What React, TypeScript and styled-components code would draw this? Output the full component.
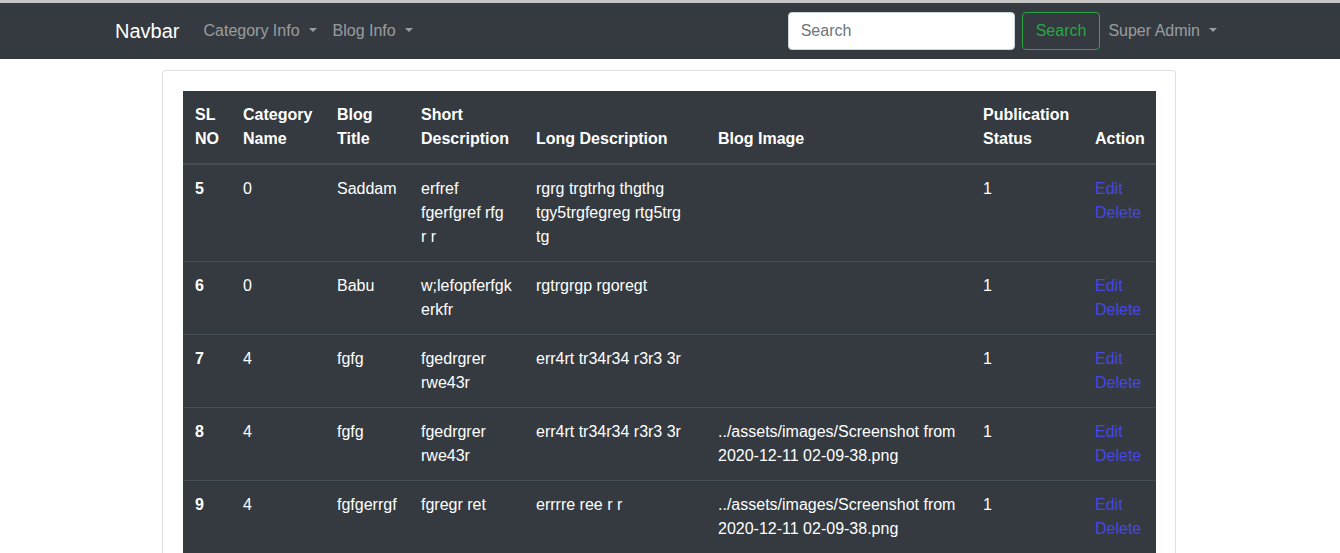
import React from "react";
import styled, { createGlobalStyle } from "styled-components";

const GlobalStyle = createGlobalStyle`
  html, body {
    margin: 0;
    padding: 0;
    background: #fff;
  }
  body {
    font-family: "Liberation Sans", Arial, sans-serif;
    font-size: 16px;
    line-height: 1.5;
    color: #212529;
    border-top: 3px solid #c6c6c6;
  }
  * {
    box-sizing: border-box;
  }
`;

type Blog = {
  id: number;
  category: string;
  title: string;
  short: string;
  long: string;
  image: string;
  status: number;
};

const blogs: Blog[] = [
  {
    id: 5,
    category: "0",
    title: "Saddam",
    short: "erfref fgerfgref rfg r r",
    long: "rgrg trgtrhg thgthg tgy5trgfegreg rtg5trg tg",
    image: "",
    status: 1,
  },
  {
    id: 6,
    category: "0",
    title: "Babu",
    short: "w;lefopferfgk erkfr",
    long: "rgtrgrgp rgoregt",
    image: "",
    status: 1,
  },
  {
    id: 7,
    category: "4",
    title: "fgfg",
    short: "fgedrgrer rwe43r",
    long: "err4rt tr34r34 r3r3 3r",
    image: "",
    status: 1,
  },
  {
    id: 8,
    category: "4",
    title: "fgfg",
    short: "fgedrgrer rwe43r",
    long: "err4rt tr34r34 r3r3 3r",
    image: "../assets/images/Screenshot from 2020-12-11 02-09-38.png",
    status: 1,
  },
  {
    id: 9,
    category: "4",
    title: "fgfgerrgf",
    short: "fgregr ret",
    long: "errrre ree r r",
    image: "../assets/images/Screenshot from 2020-12-11 02-09-38.png",
    status: 1,
  },
];

const columns = [48, 94, 84, 115, 182, 265, 112, 73];

const App: React.FC = () => {
  return (
    <>
      <GlobalStyle />
      <Navbar>
        <NavContainer>
          <Brand href="#">Navbar</Brand>
          <NavList>
            <NavItem>
              <NavLink href="#">
                Category Info
                <Caret />
              </NavLink>
            </NavItem>
            <NavItem>
              <NavLink href="#">
                Blog Info
                <Caret />
              </NavLink>
            </NavItem>
          </NavList>
          <SearchForm onSubmit={(e) => e.preventDefault()}>
            <SearchInput type="search" placeholder="Search" />
            <SearchButton type="submit">Search</SearchButton>
          </SearchForm>
          <NavList>
            <NavItem>
              <NavLink href="#">
                Super Admin
                <Caret />
              </NavLink>
            </NavItem>
          </NavList>
        </NavContainer>
      </Navbar>

      <Page>
        <Card>
          <CardBody>
            <Table>
              <colgroup>
                {columns.map((w, i) => (
                  <col key={i} style={{ width: w }} />
                ))}
              </colgroup>
              <thead>
                <tr>
                  <Th>SL NO</Th>
                  <Th>Category Name</Th>
                  <Th>Blog Title</Th>
                  <Th>Short Description</Th>
                  <Th>Long Description</Th>
                  <Th>Blog Image</Th>
                  <Th>Publication Status</Th>
                  <Th>Action</Th>
                </tr>
              </thead>
              <tbody>
                {blogs.map((b) => (
                  <tr key={b.id}>
                    <Td $bold>{b.id}</Td>
                    <Td>{b.category}</Td>
                    <Td>{b.title}</Td>
                    <Td>{b.short}</Td>
                    <Td>{b.long}</Td>
                    <Td>{b.image}</Td>
                    <Td>{b.status}</Td>
                    <Td>
                      <ActionLink href="#">Edit</ActionLink>
                      <ActionLink href="#">Delete</ActionLink>
                    </Td>
                  </tr>
                ))}
              </tbody>
            </Table>
          </CardBody>
        </Card>
      </Page>
    </>
  );
};
export default App;

const Navbar = styled.nav`
  background: #343a40;
  padding: 8px 0;
`;

const NavContainer = styled.div`
  width: 1140px;
  margin: 0 auto;
  padding: 0 15px;
  display: flex;
  align-items: center;
  height: 40px;
`;

const Brand = styled.a`
  font-size: 20px;
  line-height: 30px;
  color: #fff;
  text-decoration: none;
  margin-right: 16px;
  padding: 5px 0;
`;

const NavList = styled.ul`
  display: flex;
  list-style: none;
  margin: 0;
  padding: 0;
`;

const NavItem = styled.li`
  display: block;
`;

const NavLink = styled.a`
  display: block;
  padding: 8px;
  color: rgba(255, 255, 255, 0.5);
  text-decoration: none;
  font-size: 16px;
  line-height: 24px;
`;

const Caret = styled.span`
  display: inline-block;
  margin-left: 9px;
  vertical-align: 4px;
  border-top: 4.5px solid;
  border-right: 4.5px solid transparent;
  border-left: 4.5px solid transparent;
`;

const SearchForm = styled.form`
  margin-left: auto;
  display: flex;
  align-items: center;
`;

const SearchInput = styled.input`
  width: 227px;
  height: 38px;
  padding: 6px 12px;
  font-family: "Liberation Sans", Arial, sans-serif;
  font-size: 16px;
  color: #495057;
  background: #fff;
  border: 1px solid #ced4da;
  border-radius: 4px;
  margin-right: 7px;
  outline: none;
  &::placeholder {
    color: #6c757d;
  }
`;

const SearchButton = styled.button`
  height: 38px;
  padding: 6px 13px;
  font-family: "Liberation Sans", Arial, sans-serif;
  font-size: 16px;
  line-height: 24px;
  color: #28a745;
  background: transparent;
  border: 1px solid #28a745;
  border-radius: 4px;
`;

const Page = styled.div`
  width: 1014px;
  margin: 11px auto 0;
  position: relative;
  left: -1px;
`;

const Card = styled.div`
  background: #fff;
  border: 1px solid rgba(0, 0, 0, 0.125);
  border-radius: 4px;
`;

const CardBody = styled.div`
  padding: 20px;
`;

const Table = styled.table`
  width: 973px;
  table-layout: fixed;
  border-collapse: collapse;
  background: #343a40;
  color: #fff;
`;

const Th = styled.th`
  padding: 12px;
  text-align: left;
  vertical-align: bottom;
  font-weight: 700;
  border-bottom: 2px solid #454d55;
`;

const Td = styled.td<{ $bold?: boolean }>`
  padding: 12px;
  vertical-align: top;
  border-top: 1px solid #454d55;
  font-weight: ${(p) => (p.$bold ? 700 : 400)};
`;

const ActionLink = styled.a`
  display: block;
  color: #4747e6;
  text-decoration: none;
`;
